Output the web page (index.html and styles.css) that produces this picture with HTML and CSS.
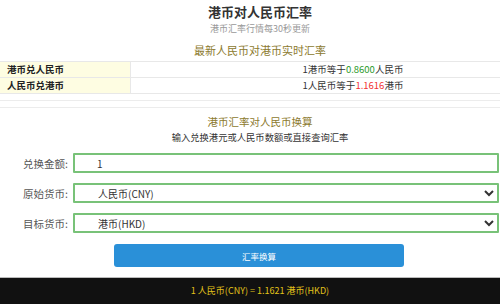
FILE: index.html
```html
<!DOCTYPE html>
<html lang="zh-CN">
<head>
  <meta charset="UTF-8" />
  <meta name="viewport" content="width=device-width, initial-scale=1.0"/>
  <title>港币对人民币汇率</title>
  <link rel="stylesheet" href="styles.css">
</head>
<body>

<div class="head">
  <h1>港币对人民币汇率</h1>
  <p class="sub">港币汇率行情每30秒更新</p>
  <h2>最新人民币对港币实时汇率</h2>
</div>

<table class="rates">
  <tr>
    <th>港币兑人民币</th>
    <td>1港币等于<span class="up">0.8600</span>人民币</td>
  </tr>
  <tr>
    <th>人民币兑港币</th>
    <td>1人民币等于<span class="down">1.1616</span>港币</td>
  </tr>
</table>

<div class="sep"></div>

<div class="head">
  <h2 class="calc-title">港币汇率对人民币换算</h2>
  <p class="hint">输入兑换港元或人民币数额或直接查询汇率</p>
</div>

<form class="calc" onsubmit="return false">
  <div class="row">
    <label for="amount">兑换金额:</label>
    <input id="amount" type="text" value="1">
  </div>
  <div class="row">
    <label for="from">原始货币:</label>
    <select id="from">
      <option>人民币(CNY)</option>
      <option>港币(HKD)</option>
    </select>
  </div>
  <div class="row">
    <label for="to">目标货币:</label>
    <select id="to">
      <option>港币(HKD)</option>
      <option>人民币(CNY)</option>
    </select>
  </div>
  <button type="button" class="go">汇率换算</button>
</form>

<div class="result">1 人民币(CNY) = 1.1621 港币(HKD)</div>

</body>
</html>
```

FILE: styles.css
```css
body {
  margin: 0;
  font-family: "Noto Sans CJK SC", "Liberation Sans", sans-serif;
  font-size: 10px;
  color: #333;
  background: #fff;
}

.head {
  padding-left: 20px;
  text-align: center;
}

h1 {
  margin: 1px 0 0;
  font-size: 13px;
  line-height: 22px;
  color: #333;
}

.sub {
  margin: 0;
  font-size: 9px;
  line-height: 11px;
  color: #999;
}

h2 {
  margin: 8px 0 3px;
  font-size: 11px;
  font-weight: normal;
  line-height: 16px;
  color: #8c7a2e;
}

.rates {
  width: 100%;
  border-collapse: collapse;
  font-size: 9.5px;
}

.rates th,
.rates td {
  height: 15px;
  padding: 0 7px;
  line-height: 15px;
  border-top: 1px solid #e8e8e8;
  border-bottom: 1px solid #e8e8e8;
}

.rates th {
  width: 116px;
  text-align: left;
  background: #fefde2;
  color: #222;
  border-right: 1px solid #e8e8e8;
}

.rates td {
  padding-left: 82px;
  text-align: center;
  color: #333;
}

.up { color: #2b9a2b; }
.down { color: #f23030; }

.sep {
  height: 6px;
  margin-top: 6px;
  border-top: 1px solid #ececec;
  border-bottom: 1px solid #ececec;
}

h2.calc-title {
  margin: 6px 0 0;
  font-size: 10.5px;
}

.hint {
  margin: 0;
  font-size: 9.3px;
  line-height: 14px;
  color: #333;
}

.calc {
  display: flex;
  flex-direction: column;
  gap: 10px;
  margin-top: 9px;
  padding-right: 1px;
}

.row {
  display: flex;
  align-items: center;
  gap: 5px;
}

.row label {
  width: 68px;
  text-align: right;
  font-size: 10.5px;
  color: #555;
}

.row input,
.row select {
  flex: 1;
  box-sizing: border-box;
  height: 20px;
  margin: 0;
  border: 2px solid #78c278;
  border-radius: 1px;
  background: #fff;
  font-family: inherit;
  font-size: 10px;
  color: #333;
  outline: none;
}

.row input {
  padding: 0 0 0 22px;
}

.row select {
  padding: 0 4px 0 19px;
}

.go {
  align-self: flex-start;
  width: 290px;
  height: 23px;
  margin: 1px 0 0 114px;
  border: none;
  border-radius: 3px;
  background: #2a90d8;
  color: #fff;
  font-family: inherit;
  font-size: 8.5px;
  cursor: pointer;
}

.result {
  margin-top: 10px;
  height: 26px;
  padding-left: 20px;
  line-height: 25px;
  border-top: 1px solid #bbb;
  background: #111;
  color: #e2c21a;
  font-size: 9px;
  text-align: center;
}
```
